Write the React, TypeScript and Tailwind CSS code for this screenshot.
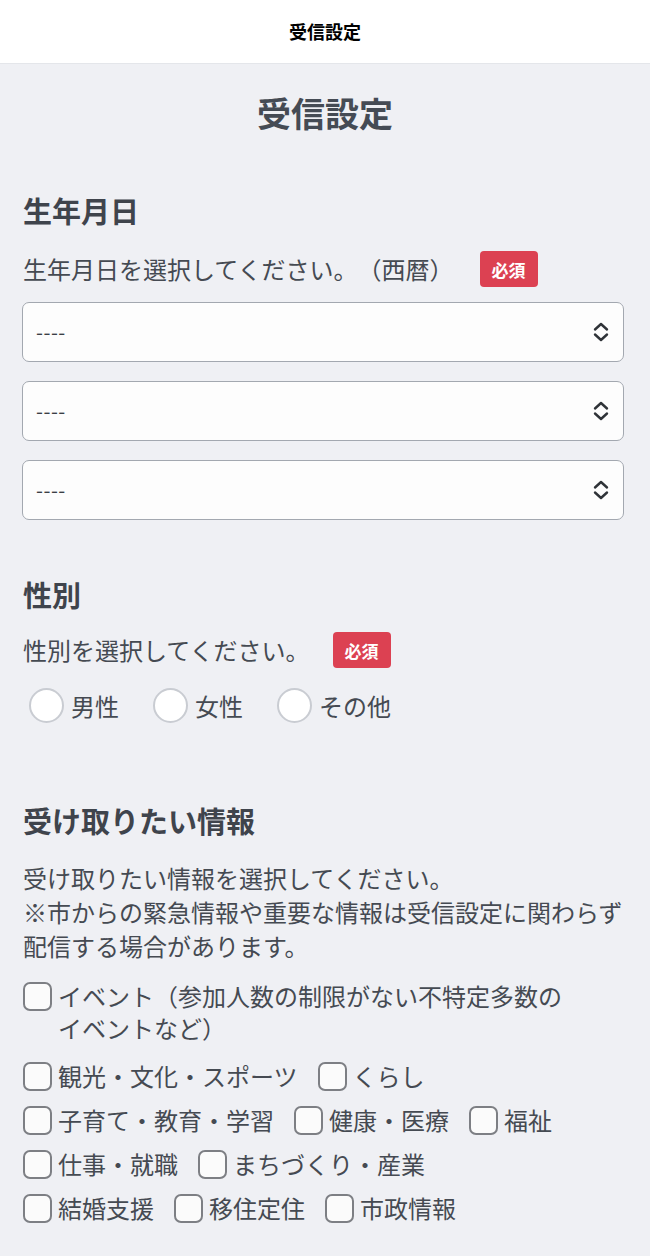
import React from "react";

const font = { fontFamily: '"Noto Sans CJK JP", "Noto Sans", sans-serif' };

function Badge({ ml }: { ml: string }) {
  return (
    <span className={`inline-flex items-center justify-center h-[36px] px-[12px] rounded-[4px] bg-[#dc4152] text-white text-[17px] leading-none font-bold ${ml}`}>
      必須
    </span>
  );
}

function SelectBox() {
  return (
    <div className="h-[60px] rounded-[7px] border-[1.5px] border-[#a3a8b0] bg-[#fdfdfd] flex items-center justify-between pl-[13px] pr-[13px]">
      <span className="text-[20px] text-[#3b3f45] tracking-[0.5px]">----</span>
      <svg width="18" height="22" viewBox="0 0 18 22" fill="none" stroke="#2f3338" strokeWidth="2.4" strokeLinecap="round" strokeLinejoin="round">
        <path d="M3 8.5 L9 3 L15 8.5" />
        <path d="M3 13.5 L9 19 L15 13.5" />
      </svg>
    </div>
  );
}

function Radio({ label }: { label: string }) {
  return (
    <div className="flex items-center">
      <span className="w-[35px] h-[35px] rounded-full border-2 border-[#c9ccd2] bg-white" />
      <span className="ml-[7px] text-[24px] leading-[34px] text-[#454a52]">{label}</span>
    </div>
  );
}

function Check({ label }: { label: string }) {
  return (
    <div className="flex items-center">
      <span className="w-[29px] h-[29px] rounded-[7px] border-2 border-[#7d7f84] bg-[#fbfbfb] shrink-0" />
      <span className="ml-[6px] text-[24px] leading-[32px] text-[#454a52]">{label}</span>
    </div>
  );
}

export default function App() {
  return (
    <div style={font} className="w-[650px] min-h-[1256px] bg-[#eff0f4] [text-spacing-trim:space-all]">
      <header className="h-[64px] bg-white border-b border-[#e4e6ea] flex items-center justify-center">
        <span className="text-[18px] font-bold text-black">受信設定</span>
      </header>
      <main className="pl-[23px] pr-[26px]">
        <h1 className="text-center text-[34px] font-bold text-[#454b54] pt-[26px] leading-[46px] pl-[3px]">受信設定</h1>

        <h2 className="mt-[55px] text-[29px] font-bold text-[#3f444c] leading-[38px]">生年月日</h2>
        <div className="mt-[22px] flex items-center text-[24px] text-[#454a52] leading-[36px]">
          <span>生年月日を選択してください。（西暦）</span>
          <Badge ml="ml-[26px]" />
        </div>
        <div className="mt-[15px] -ml-[1px] flex flex-col gap-[19px]">
          <SelectBox />
          <SelectBox />
          <SelectBox />
        </div>

        <h2 className="mt-[55px] text-[29px] font-bold text-[#3f444c] leading-[38px]">性別</h2>
        <div className="mt-[19px] flex items-center text-[24px] text-[#454a52] leading-[36px]">
          <span>性別を選択してください。</span>
          <Badge ml="ml-[23px]" />
        </div>
        <div className="mt-[20px] ml-[6px] flex items-center gap-[34px]">
          <Radio label="男性" />
          <Radio label="女性" />
          <Radio label="その他" />
        </div>

        <h2 className="mt-[78px] text-[29px] font-bold text-[#3f444c] leading-[38px]">受け取りたい情報</h2>
        <div className="mt-[22px] text-[24px] text-[#454a52] leading-[34px] -mr-[10px]">
          <p>受け取りたい情報を選択してください。</p>
          <p>※市からの緊急情報や重要な情報は受信設定に関わらず</p>
          <p>配信する場合があります。</p>
        </div>

        <div className="mt-[17px] flex items-start">
          <span className="mt-[2px] w-[29px] h-[29px] rounded-[7px] border-2 border-[#7d7f84] bg-[#fbfbfb] shrink-0" />
          <span className="ml-[6px] text-[24px] text-[#454a52] leading-[32px]">
            イベント（参加人数の制限がない不特定多数の<br />イベントなど）
          </span>
        </div>
        <div className="mt-[10px] flex flex-col">
          <div className="h-[44px] flex items-center gap-[20px]">
            <Check label="観光・文化・スポーツ" />
            <Check label="くらし" />
          </div>
          <div className="h-[44px] flex items-center gap-[20px]">
            <Check label="子育て・教育・学習" />
            <Check label="健康・医療" />
            <Check label="福祉" />
          </div>
          <div className="h-[44px] flex items-center gap-[20px]">
            <Check label="仕事・就職" />
            <Check label="まちづくり・産業" />
          </div>
          <div className="h-[44px] flex items-center gap-[20px]">
            <Check label="結婚支援" />
            <Check label="移住定住" />
            <Check label="市政情報" />
          </div>
        </div>
      </main>
    </div>
  );
}
